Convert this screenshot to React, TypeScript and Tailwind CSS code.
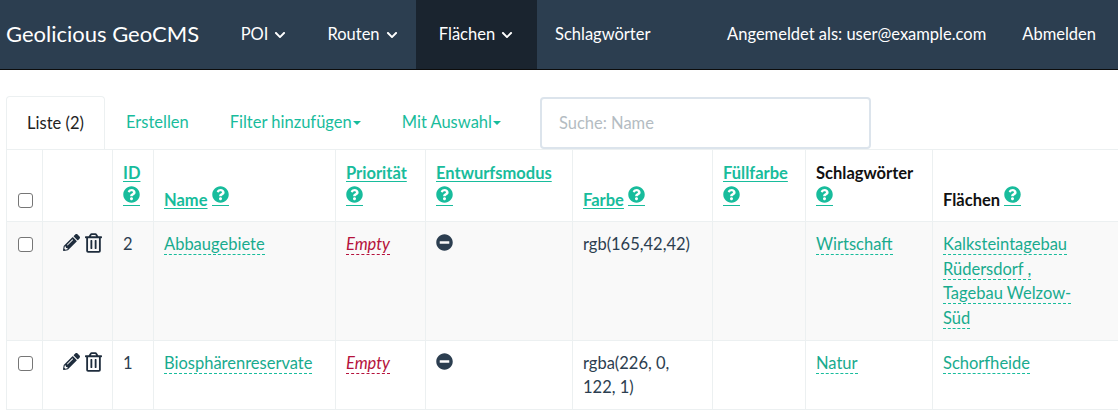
import type { ReactNode } from 'react';
import { FaChevronDown, FaQuestionCircle, FaPencilAlt, FaRegTrashAlt, FaMinusCircle } from 'react-icons/fa';

const GREEN = 'text-[#18bc9c]';

function Help() {
  return (
    <span className={`inline-block border-b border-[#18bc9c] ${GREEN}`}>
      <FaQuestionCircle className="h-[17px] w-[17px] mb-[2px]" />
    </span>
  );
}

function SortHead({ label, inline }: { label: string; inline?: boolean }) {
  return (
    <span className="font-bold">
      <span className={`underline underline-offset-2 ${GREEN}`}>{label}</span>
      {inline ? ' ' : <br />}
      <Help />
    </span>
  );
}

function Editable({ children, red }: { children: ReactNode; red?: boolean }) {
  return (
    <span className={`border-b border-dashed ${red ? 'italic text-[#b5123c] border-[#b5123c]' : 'text-[#18ab8e] border-[#18bc9c]'}`}>
      {children}
    </span>
  );
}

function NavDrop({ label, active, cls }: { label: string; active?: boolean; cls: string }) {
  return (
    <div className={`flex items-center justify-center gap-[5px] h-full ${cls} ${active ? 'bg-[#1a242f]' : ''}`}>
      {label}
      <FaChevronDown className="h-[12px] w-[14px]" />
    </div>
  );
}

function Caret() {
  return <span className="inline-block ml-[1px] align-middle border-x-[4px] border-x-transparent border-t-[4px] border-t-[#18bc9c]" />;
}

const thCls = 'border border-[#ecf0f1] px-[10px] pt-[11px] pb-[9px] align-bottom text-left font-bold text-[#111]';
const tdCls = 'border border-[#ecf0f1] px-[10px] pt-[10px] pb-[9px] align-top text-[#2c3e50]';

function Row({ id, name, color, tag, areas, striped }: { id: string; name: string; color: string; tag: string; areas: ReactNode; striped?: boolean }) {
  return (
    <tr className={striped ? 'bg-[#f9f9f9]' : ''}>
      <td className={tdCls}>
        <span className="block h-[15px] w-[15px] mt-[5px] ml-[1px] rounded-[3px] border border-[#767676] bg-white" />
      </td>
      <td className={tdCls}>
        <div className="flex justify-end items-start gap-[5px] pr-[0px] mt-[1px]">
          <FaPencilAlt className="h-[17px] w-[17px] mt-[1px] text-[#1f2d3d]" />
          <FaRegTrashAlt className="h-[20px] w-[17px] text-[#1f2d3d]" />
        </div>
      </td>
      <td className={tdCls}>{id}</td>
      <td className={tdCls}><Editable>{name}</Editable></td>
      <td className={tdCls}><Editable red>Empty</Editable></td>
      <td className={tdCls}><FaMinusCircle className="h-[17px] w-[17px] mt-[2px] text-[#2c3e50]" /></td>
      <td className={tdCls}>{color}</td>
      <td className={tdCls}></td>
      <td className={tdCls}><Editable>{tag}</Editable></td>
      <td className={tdCls}>{areas}</td>
    </tr>
  );
}

export default function App() {
  return (
    <div className="w-[1118px] h-[413px] overflow-hidden bg-white font-['Lato','Open_Sans',sans-serif] text-[16.5px] leading-[24.6px] text-[#2c3e50]">
      {/* Navbar */}
      <nav className="flex h-[70px] items-stretch bg-[#2c3e50] border-b border-[#0c0c0c] text-white">
        <div className="flex items-center w-[219px] pl-[6px] text-[22px] whitespace-nowrap">Geolicious GeoCMS</div>
        <NavDrop label="POI" cls="w-[90px]" />
        <NavDrop label="Routen" cls="w-[108px]" />
        <NavDrop label="Flächen" active cls="w-[121px] ml-[-1px]" />
        <div className="flex items-center pl-[18px] whitespace-nowrap">Schlagwörter</div>
        <div className="flex-1" />
        <div className="flex items-center whitespace-nowrap">Angemeldet als: user@example.com</div>
        <div className="flex items-center pl-[36px] pr-[22px] whitespace-nowrap">Abmelden</div>
      </nav>

      {/* Tabs and search */}
      <div className="flex items-start h-[79px] pt-[26px] pl-[6px]">
        <div className="flex h-[53px] w-[99px] items-center justify-center rounded-t-[4px] border border-b-0 border-[#ecf0f1] text-[#222]">Liste (2)</div>
        <div className={`flex h-[53px] items-center ml-[21px] ${GREEN}`}>Erstellen</div>
        <div className={`flex h-[53px] items-center ml-[41px] ${GREEN}`}>Filter hinzufügen<Caret /></div>
        <div className={`flex h-[53px] items-center ml-[41px] ${GREEN}`}>Mit Auswahl<Caret /></div>
        <div className="ml-[39px] mt-[1px] flex h-[52px] w-[331px] items-center rounded-[4px] border-2 border-[#dce4ec] pl-[17px] text-[#b4bcc2]">Suche: Name</div>
      </div>

      {/* Table */}
      <div className="pl-[6px]">
        <table className="w-[1112px] table-fixed border-collapse">
          <colgroup>
            <col className="w-[36px]" />
            <col className="w-[70px]" />
            <col className="w-[41px]" />
            <col className="w-[182px]" />
            <col className="w-[90px]" />
            <col className="w-[147px]" />
            <col className="w-[140px]" />
            <col className="w-[93px]" />
            <col className="w-[127px]" />
            <col className="w-[186px]" />
          </colgroup>
          <thead>
            <tr className="h-[69px]">
              <th className={thCls}><span className="block h-[15px] w-[15px] mb-[4px] ml-[1px] rounded-[3px] border border-[#767676] bg-white" /></th>
              <th className={thCls}></th>
              <th className={thCls}><SortHead label="ID" /></th>
              <th className={thCls}><SortHead label="Name" inline /></th>
              <th className={thCls}><SortHead label="Priorität" /></th>
              <th className={thCls}><SortHead label="Entwurfsmodus" /></th>
              <th className={thCls}><SortHead label="Farbe" inline /></th>
              <th className={thCls}><SortHead label="Füllfarbe" /></th>
              <th className={thCls}>Schlagwörter<br /><Help /></th>
              <th className={thCls}>Flächen <Help /></th>
            </tr>
          </thead>
          <tbody>
            <Row
              striped
              id="2"
              name="Abbaugebiete"
              color="rgb(165,42,42)"
              tag="Wirtschaft"
              areas={<span className="inline-block w-[150px]"><Editable>Kalksteintagebau</Editable> <Editable>Rüdersdorf ,</Editable> <Editable>Tagebau Welzow-</Editable> <Editable>Süd</Editable></span>}
            />
            <Row id="1" name="Biosphärenreservate" color="rgba(226, 0, 122, 1)" tag="Natur" areas={<Editable>Schorfheide</Editable>} />
          </tbody>
        </table>
      </div>
    </div>
  );
}
